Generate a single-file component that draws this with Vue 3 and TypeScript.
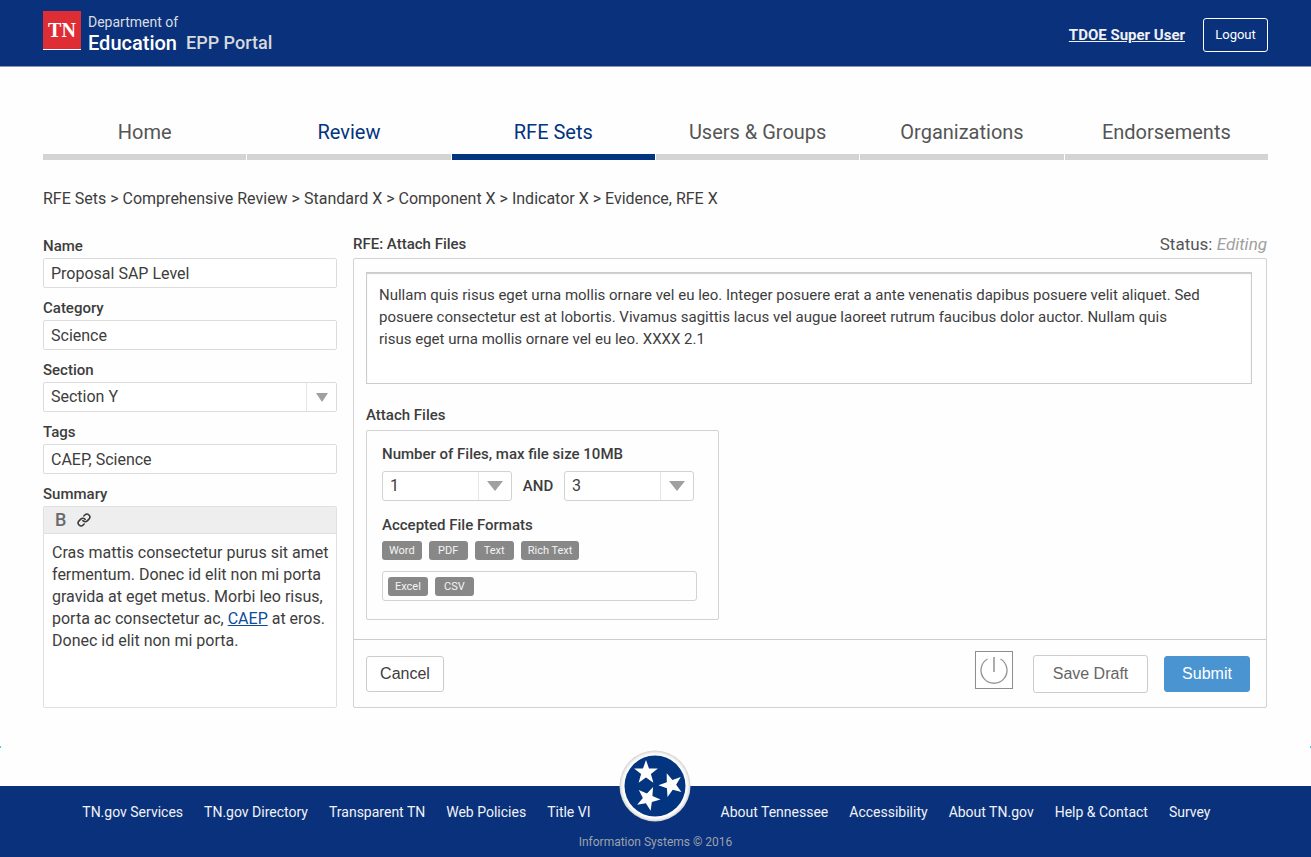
<script setup lang="ts">
import { ref } from 'vue'

interface Tab {
  label: string
  state: 'plain' | 'linked' | 'active'
}

const tabs: Tab[] = [
  { label: 'Home', state: 'plain' },
  { label: 'Review', state: 'linked' },
  { label: 'RFE Sets', state: 'active' },
  { label: 'Users & Groups', state: 'plain' },
  { label: 'Organizations', state: 'plain' },
  { label: 'Endorsements', state: 'plain' },
]

const name = ref('Proposal SAP Level')
const category = ref('Science')
const section = ref('Section Y')
const tags = ref('CAEP, Science')
const instructions = ref(
  'Nullam quis risus eget urna mollis ornare vel eu leo. Integer posuere erat a ante venenatis dapibus posuere velit aliquet. Sed posuere consectetur est at lobortis. Vivamus sagittis lacus vel augue laoreet rutrum faucibus dolor auctor. Nullam quis\nrisus eget urna mollis ornare vel eu leo. XXXX 2.1',
)
const minFiles = ref('1')
const maxFiles = ref('3')
const fileCounts: string[] = ['1', '2', '3', '4', '5']

const availableFormats = ref<string[]>(['Word', 'PDF', 'Text', 'Rich Text'])
const acceptedFormats = ref<string[]>(['Excel', 'CSV'])

function accept(format: string): void {
  availableFormats.value = availableFormats.value.filter((f) => f !== format)
  acceptedFormats.value.push(format)
}

function release(format: string): void {
  acceptedFormats.value = acceptedFormats.value.filter((f) => f !== format)
  availableFormats.value.push(format)
}

const leftLinks: string[] = ['TN.gov Services', 'TN.gov Directory', 'Transparent TN', 'Web Policies', 'Title VI']
const rightLinks: string[] = ['About Tennessee', 'Accessibility', 'About TN.gov', 'Help & Contact', 'Survey']
</script>

<template>
  <div class="page">
    <header class="top">
      <div class="brand">
        <span class="tn">TN</span>
        <div class="brand-text">
          <span class="dept">Department of</span>
          <span class="portal"><strong>Education</strong><span>EPP Portal</span></span>
        </div>
      </div>
      <div class="account">
        <a href="#" class="user">TDOE Super User</a>
        <button type="button" class="logout">Logout</button>
      </div>
    </header>

    <nav class="tabs" aria-label="Main">
      <a v-for="tab in tabs" :key="tab.label" href="#" class="tab" :class="tab.state">{{ tab.label }}</a>
    </nav>

    <p class="crumbs">RFE Sets &gt; Comprehensive Review &gt; Standard X &gt; Component X &gt; Indicator X &gt; Evidence, RFE X</p>

    <main class="content">
      <form class="side" @submit.prevent>
        <div class="field">
          <label for="name">Name</label>
          <input id="name" v-model="name" type="text" />
        </div>
        <div class="field">
          <label for="category">Category</label>
          <input id="category" v-model="category" type="text" />
        </div>
        <div class="field">
          <label for="section">Section</label>
          <span class="select">
            <select id="section" v-model="section">
              <option>Section X</option>
              <option>Section Y</option>
              <option>Section Z</option>
            </select>
            <span class="arrow"><svg width="12" height="9" viewBox="0 0 12 9"><path d="M0 0h12L6 9z" /></svg></span>
          </span>
        </div>
        <div class="field">
          <label for="tags">Tags</label>
          <input id="tags" v-model="tags" type="text" />
        </div>
        <div class="field grow">
          <span id="summary-label" class="label">Summary</span>
          <div class="editor">
            <div class="toolbar">
              <button type="button" class="bold" aria-label="Bold">B</button>
              <button type="button" aria-label="Insert link">
                <svg width="14" height="14" viewBox="0 0 24 24" fill="none" stroke="#3a3a3a" stroke-width="2.7" stroke-linecap="round">
                  <path d="M10 13a5 5 0 0 0 7.540.540l3-3a5 5 0 0 0-7.070-7.070l-1.720 1.710" />
                  <path d="M14 11a5 5 0 0 0-7.540-.540l-3 3a5 5 0 0 0 7.070 7.070l1.710-1.710" />
                </svg>
              </button>
            </div>
            <div class="summary" contenteditable="true" role="textbox" aria-multiline="true" aria-labelledby="summary-label" spellcheck="false">Cras mattis consectetur purus sit amet fermentum. Donec id elit non mi porta gravida at eget metus. Morbi leo risus, porta ac consectetur ac, <a href="#">CAEP</a> at eros. Donec id elit non mi porta.</div>
          </div>
        </div>
      </form>

      <form class="rfe" @submit.prevent>
        <div class="rfe-head">
          <label for="instructions">RFE: Attach Files</label>
          <span class="status">Status: <em>Editing</em></span>
        </div>
        <div class="panel">
          <div class="panel-body">
            <textarea id="instructions" v-model="instructions" spellcheck="false"></textarea>
            <h2 class="attach-title">Attach Files</h2>
            <div class="attach">
              <h3>Number of Files, max file size 10MB</h3>
              <div class="counts">
                <span class="select small">
                  <select v-model="minFiles" aria-label="Minimum number of files">
                    <option v-for="n in fileCounts" :key="n">{{ n }}</option>
                  </select>
                  <span class="arrow"><svg width="16" height="10" viewBox="0 0 16 10"><path d="M0 0h16L8 10z" /></svg></span>
                </span>
                <span class="and">AND</span>
                <span class="select small">
                  <select v-model="maxFiles" aria-label="Maximum number of files">
                    <option v-for="n in fileCounts" :key="n">{{ n }}</option>
                  </select>
                  <span class="arrow"><svg width="16" height="10" viewBox="0 0 16 10"><path d="M0 0h16L8 10z" /></svg></span>
                </span>
              </div>
              <h3>Accepted File Formats</h3>
              <div class="chips">
                <button v-for="f in availableFormats" :key="f" type="button" class="chip" @click="accept(f)">{{ f }}</button>
              </div>
              <div class="chips box">
                <button v-for="f in acceptedFormats" :key="f" type="button" class="chip" @click="release(f)">{{ f }}</button>
              </div>
            </div>
          </div>
          <div class="actions">
            <button type="button" class="btn cancel">Cancel</button>
            <button type="button" class="power" aria-label="Toggle active">
              <svg width="36" height="36" viewBox="0 0 36 36" fill="none" stroke="#999" stroke-width="1.4">
                <path d="M11.500 7A13 13 0 1 0 24.500 7" />
                <path d="M18 5v15" stroke-width="1.600" />
              </svg>
            </button>
            <button type="button" class="btn draft">Save Draft</button>
            <button type="submit" class="btn submit">Submit</button>
          </div>
        </div>
      </form>
    </main>

    <div class="edge-marks" aria-hidden="true"><i></i><i></i></div>

    <footer class="bottom">
      <div class="links">
        <nav class="left" aria-label="State services">
          <a v-for="l in leftLinks" :key="l" href="#">{{ l }}</a>
        </nav>
        <nav class="right" aria-label="About the state">
          <a v-for="l in rightLinks" :key="l" href="#">{{ l }}</a>
        </nav>
      </div>
      <p class="copy">Information Systems © 2016</p>
      <svg class="seal" width="72" height="72" viewBox="0 0 72 72" role="img" aria-label="Tennessee three stars">
        <defs>
          <radialGradient id="rim">
            <stop offset="0.88" stop-color="#fff" />
            <stop offset="0.94" stop-color="#efefef" />
            <stop offset="1" stop-color="#cfcfcf" />
          </radialGradient>
          <path id="star" d="M0-12.500 3-4.100H11.900L4.900 1.600 7.400 10.200 0 5.100-7.400 10.200-4.900 1.600-11.900-4.100H-3Z" />
        </defs>
        <circle cx="36" cy="36" r="35.500" fill="url(#rim)" />
        <circle cx="36" cy="36" r="30.500" fill="#02347f" />
        <g fill="#fff">
          <use href="#star" transform="translate(27 22.500)" />
          <use href="#star" transform="translate(52 35) rotate(-20)" />
          <use href="#star" transform="translate(29 48.500) rotate(24)" />
        </g>
      </svg>
    </footer>
  </div>
</template>

<style>
body {
  margin: 0;
  background: #fefefe;
}
</style>

<style scoped>
.page {
  display: flex;
  flex-direction: column;
  min-height: 100vh;
  font-family: Roboto, "Liberation Sans", sans-serif;
  font-size: 16px;
  line-height: 20px;
  color: #3d3d3d;
}
.page *,
.page *::before {
  box-sizing: border-box;
}
button,
input,
select,
textarea {
  font: inherit;
  color: inherit;
  margin: 0;
}
button {
  cursor: pointer;
}
h2,
h3,
p {
  margin: 0;
}

.top {
  display: flex;
  justify-content: space-between;
  height: 67px;
  padding: 11px 43px 0;
  background: #0a317b;
  border-bottom: 1px solid #8497bd;
}
.brand {
  display: flex;
  gap: 7px;
}
.tn {
  width: 38px;
  height: 39px;
  border-bottom: 1px solid #fff;
  background: #df2d36;
  color: #fff;
  font: bold 20px/38px "Liberation Serif", serif;
  text-align: center;
}
.brand-text {
  display: flex;
  flex-direction: column;
}
.dept {
  font-size: 14px;
  line-height: 22px;
  color: #dadde2;
}
.portal {
  display: flex;
  gap: 9px;
  font-size: 18px;
  font-weight: 500;
  color: #d7d9dc;
}
.portal strong {
  font-size: 20px;
  font-weight: 500;
  color: #fff;
}
.account {
  display: flex;
  align-items: flex-start;
  gap: 18px;
  padding-top: 7px;
}
.user {
  line-height: 34px;
  font-size: 15px;
  font-weight: 700;
  color: #eef0f4;
}
.logout {
  width: 65px;
  height: 34px;
  padding: 0;
  border: 1px solid #fff;
  border-radius: 3px;
  background: none;
  color: #fff;
  font-size: 13px;
}

.tabs {
  display: grid;
  grid-template-columns: repeat(6, 1fr);
  gap: 1px;
  margin: 50px 43px 0;
}
.tab {
  height: 43px;
  border-bottom: 6px solid #d4d4d4;
  color: #555;
  font-size: 20px;
  line-height: 30px;
  text-align: center;
  text-decoration: none;
}
.tab.linked,
.tab.active {
  color: #02347f;
}
.tab.active {
  border-bottom-color: #02347f;
}

.crumbs {
  padding: 29px 43px 0;
}

.content {
  display: grid;
  grid-template-columns: 294px 1fr;
  gap: 16px;
  padding: 27px 44px 0 43px;
}
.side {
  display: flex;
  flex-direction: column;
  gap: 10px;
}
.field {
  display: flex;
  flex-direction: column;
  gap: 2px;
}
.grow {
  flex: 1;
}
.field label,
.label,
.rfe-head label,
h2,
h3 {
  font-size: 15px;
  font-weight: 500;
}
.field input,
.select {
  height: 30px;
  border: 1px solid #dcdcdc;
  border-radius: 2px;
  background: #fff;
}
.field input {
  padding: 0 7px;
}
.select {
  display: grid;
  grid-template-columns: 1fr 30px;
}
.select select {
  grid-area: 1 / 1 / 2 / 3;
  width: 100%;
  padding: 0 37px 0 7px;
  border: 0;
  background: none;
  appearance: none;
}
.arrow {
  grid-area: 1 / 2;
  display: flex;
  align-items: center;
  justify-content: center;
  border-left: 1px solid #e6e6e6;
  pointer-events: none;
}
.arrow svg {
  fill: #a0a0a0;
}
.editor {
  flex: 1;
  display: flex;
  flex-direction: column;
  border: 1px solid #e0e0e0;
  border-radius: 2px;
  background: #fff;
}
.toolbar {
  display: flex;
  align-items: center;
  gap: 11px;
  height: 27px;
  padding: 0 11px;
  border-bottom: 1px solid #e0e0e0;
  background: #eee;
}
.toolbar button {
  display: flex;
  padding: 0;
  border: 0;
  background: none;
}
.toolbar .bold {
  font-size: 18px;
  font-weight: 500;
  color: #6a6a6a;
}
.summary {
  flex: 1;
  padding: 8px 4px 8px 8px;
  line-height: 22px;
  outline: none;
}
.summary a {
  color: #0b4c9c;
}

.rfe {
  display: flex;
  flex-direction: column;
}
.rfe-head {
  display: flex;
  justify-content: space-between;
  height: 22px;
  line-height: 16px;
}
.status {
  font-size: 17px;
  color: #555;
}
.status em {
  color: #a0a0a0;
}
.panel {
  border: 1px solid #d2d2d2;
  border-radius: 2px;
}
.panel-body {
  padding: 13px 14px 19px 12px;
}
textarea {
  display: block;
  width: 100%;
  height: 112px;
  padding: 11px 11px 10px 12px;
  border: 1px solid #ccc;
  box-shadow: inset 0 1px 1px #ccc;
  background: #fff;
  font-size: 15px;
  line-height: 22px;
  resize: none;
  overflow: hidden;
}
.attach-title {
  padding: 21px 0 5px;
}
.attach {
  width: 353px;
  padding: 13px 15px 18px;
  border: 1px solid #d2d2d2;
  border-radius: 2px;
}
.counts {
  display: flex;
  align-items: center;
  justify-content: space-between;
  width: 312px;
  margin: 7px 0 14px;
}
.small {
  width: 130px;
  grid-template-columns: 1fr 33px;
  border-color: #d2d2d2;
  border-radius: 3px;
}
.and {
  font-size: 15px;
  font-weight: 500;
}
.chips {
  display: flex;
  gap: 7px;
  margin-top: 6px;
}
.chip {
  min-width: 39px;
  height: 19px;
  padding: 0 7px;
  border: 0;
  border-radius: 3px;
  background: #888;
  color: #f4f4f4;
  font-size: 11px;
  line-height: 19px;
}
.box {
  width: 315px;
  height: 30px;
  margin-top: 11px;
  padding: 5px;
  border: 1px solid #d2d2d2;
  border-radius: 3px;
}
.actions {
  display: flex;
  align-items: center;
  height: 68px;
  padding: 0 16px 0 12px;
  border-top: 1px solid #ccc;
}
.btn {
  height: 36px;
  padding: 0;
  border: 1px solid #ccc;
  border-radius: 3px;
  background: #fff;
  font-family: "Liberation Sans", Arial, sans-serif;
  font-size: 16px;
}
.cancel {
  width: 78px;
}
.power {
  display: flex;
  width: 38px;
  height: 38px;
  margin: 0 20px 8px auto;
  padding: 0;
  border: 1px solid #8e8e8e;
  background: #fff;
}
.draft {
  width: 115px;
  height: 38px;
  margin-right: 16px;
  color: #666;
}
.submit {
  width: 86px;
  border-color: #4a95d1;
  background: #4a95d1;
  color: #fff;
}

.edge-marks {
  display: flex;
  justify-content: space-between;
  margin-top: 38px;
}
.edge-marks i {
  width: 1px;
  height: 2px;
  background: #4fc3ea;
}

.bottom {
  position: relative;
  height: 71px;
  margin-top: auto;
  padding-top: 16px;
  background: #0a317b;
}
.seal {
  position: absolute;
  top: -36px;
  left: calc(50% - 37px);
}
.links {
  display: grid;
  grid-template-columns: 1fr 1fr;
  column-gap: 130px;
}
.links nav {
  display: flex;
  gap: 21px;
  white-space: nowrap;
}
.links .left {
  justify-content: flex-end;
}
.links a {
  color: #f1f3f7;
  font-size: 14px;
  text-decoration: none;
}
.copy {
  margin-top: 10px;
  color: #9da2ac;
  font-size: 12px;
  text-align: center;
}
</style>
